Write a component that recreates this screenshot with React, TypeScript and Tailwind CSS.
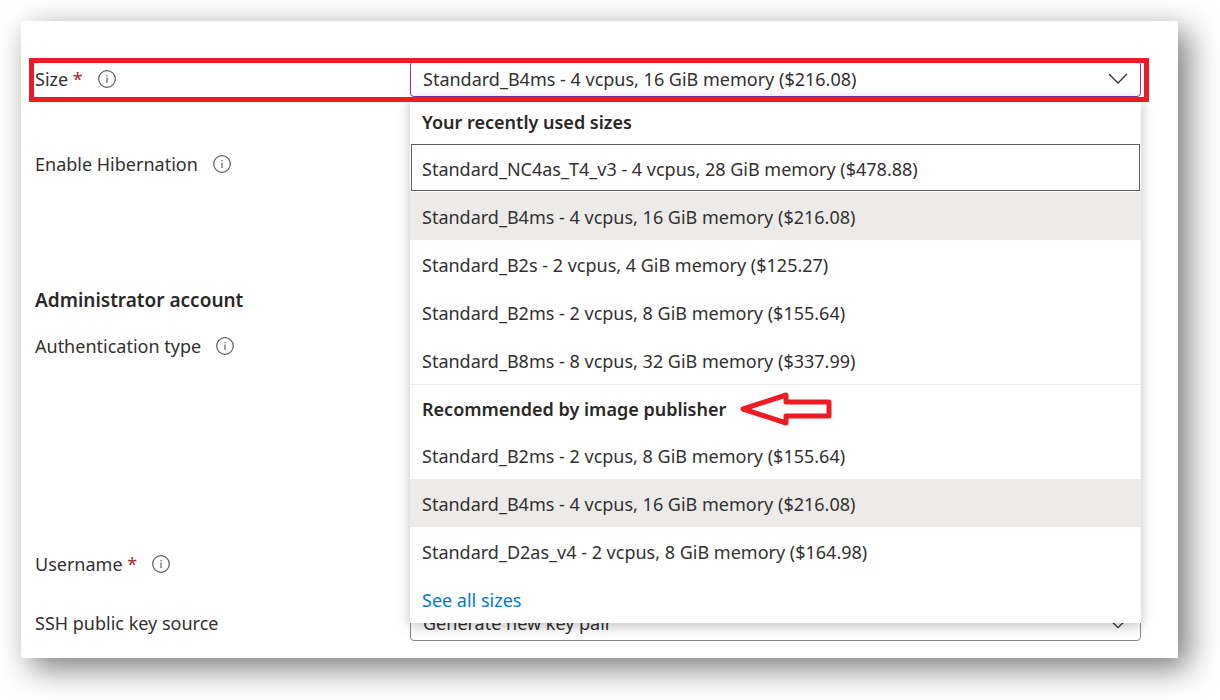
import React, { useState } from 'react';

interface VmSize {
  id: string;
  label: string;
}

interface FieldRowProps {
  label: string;
  htmlFor?: string;
  required?: boolean;
  info?: boolean;
  className?: string;
  children?: React.ReactNode;
}

const recentSizes: VmSize[] = [
  { id: 'nc4as', label: 'Standard_NC4as_T4_v3 - 4 vcpus, 28 GiB memory ($478.88)' },
  { id: 'b4ms', label: 'Standard_B4ms - 4 vcpus, 16 GiB memory ($216.08)' },
  { id: 'b2s', label: 'Standard_B2s - 2 vcpus, 4 GiB memory ($125.27)' },
  { id: 'b2ms', label: 'Standard_B2ms - 2 vcpus, 8 GiB memory ($155.64)' },
  { id: 'b8ms', label: 'Standard_B8ms - 8 vcpus, 32 GiB memory ($337.99)' },
];

const recommendedSizes: VmSize[] = [
  { id: 'b2ms', label: 'Standard_B2ms - 2 vcpus, 8 GiB memory ($155.64)' },
  { id: 'b4ms', label: 'Standard_B4ms - 4 vcpus, 16 GiB memory ($216.08)' },
  { id: 'd2as', label: 'Standard_D2as_v4 - 2 vcpus, 8 GiB memory ($164.98)' },
];

const InfoIcon = () => (
  <svg className="h-[18px] w-[18px] shrink-0" viewBox="0 0 18 18" fill="none" aria-hidden="true">
    <circle cx="9" cy="9" r="8.3" stroke="#605e5c" strokeWidth="1.2" />
    <path d="M9 7.5v5.5M9 5v1.3" stroke="#605e5c" strokeWidth="1.2" />
  </svg>
);

const ChevronIcon = ({ className }: { className: string }) => (
  <svg className={className} viewBox="0 0 20 12" fill="none" aria-hidden="true">
    <path d="M1 1l9 9 9-9" stroke="#323130" strokeWidth="1.3" vectorEffect="non-scaling-stroke" />
  </svg>
);

const FieldRow: React.FC<FieldRowProps> = ({ label, htmlFor, required, info, className = '', children }) => (
  <div className={`relative flex h-9 items-center ${className}`}>
    <div className="flex w-[375px] shrink-0 items-center gap-[15px]">
      <label htmlFor={htmlFor}>
        {label}
        {required && <span className="text-[#a4262c]"> *</span>}
      </label>
      {info && <InfoIcon />}
    </div>
    {children}
  </div>
);

interface SizeGroupProps {
  title: string;
  sizes: VmSize[];
  selected: string;
  focused?: string;
  onSelect: (id: string) => void;
  children?: React.ReactNode;
}

const SizeGroup: React.FC<SizeGroupProps> = ({ title, sizes, selected, focused, onSelect, children }) => (
  <div role="group" aria-label={title}>
    <div className="flex h-[46px] items-center gap-[14px] px-3 pt-[2px] font-semibold text-[#292827]">
      {title}
      {children}
    </div>
    {sizes.map((size) => (
      <button
        key={size.id}
        type="button"
        role="option"
        aria-selected={size.id === selected}
        onClick={() => onSelect(size.id)}
        className={`flex h-12 w-full items-start px-px text-left ${size.id === selected ? 'bg-[#edebe9]' : 'bg-white'}`}
      >
        <span
          className={`flex h-[47px] w-full items-center border px-[10px] pt-[2px] ${size.id === focused ? 'border-[#605e5c]' : 'border-transparent'}`}
        >
          {size.label}
        </span>
      </button>
    ))}
  </div>
);

export default function App() {
  const [size, setSize] = useState('b4ms');
  const allSizes = [...recentSizes, recommendedSizes[2]];

  return (
    <main className="bg-white pt-[21px] pr-[42px] pb-[42px] pl-[21px] font-['Noto_Sans','Open_Sans',sans-serif] text-[18px] leading-6 text-[#323130]">
      <form className="bg-white pt-10 pr-[37px] pb-[17px] pl-[14px] shadow-[10px_10px_30px_rgba(0,0,0,0.53)]">
        <FieldRow label="Size" htmlFor="size" required info className="z-10">
          <div className="relative min-w-0 flex-1">
            <select
              id="size"
              value={size}
              onChange={(e) => setSize(e.target.value)}
              className="block h-9 w-full appearance-none rounded-sm border border-[#8a2da5] bg-white pr-12 pl-3 outline-none"
            >
              {allSizes.map((s) => (
                <option key={s.id} value={s.id}>
                  {s.label}
                </option>
              ))}
            </select>
            <ChevronIcon className="pointer-events-none absolute top-3 right-[13px] h-3 w-5" />
            <div
              role="listbox"
              aria-label="Size"
              className="absolute inset-x-0 top-full bg-white pt-px shadow-[0_3px_12px_rgba(0,0,0,0.25)]"
            >
              <SizeGroup
                title="Your recently used sizes"
                sizes={recentSizes}
                selected={size}
                focused="nc4as"
                onSelect={setSize}
              />
              <div className="border-t border-[#edebe9]">
                <SizeGroup
                  title="Recommended by image publisher"
                  sizes={recommendedSizes}
                  selected={size}
                  onSelect={setSize}
                >
                  <svg className="h-[34px] w-[92px]" viewBox="0 0 92 34" fill="none" aria-hidden="true">
                    <path
                      d="M3 17L46 3v7h43v14H46v7z"
                      stroke="#ed1c24"
                      strokeWidth="5"
                      strokeLinejoin="round"
                    />
                  </svg>
                </SizeGroup>
              </div>
              <a href="#sizes" className="flex h-12 items-center px-3 pt-[2px] text-[#0078d4]">
                See all sizes
              </a>
            </div>
          </div>
          <div className="pointer-events-none absolute -top-[3px] -right-2 -bottom-[5px] -left-[6px] border-5 border-[#ed1c24]" />
        </FieldRow>

        <FieldRow label="Enable Hibernation" info className="mt-[49px]" />

        <h2 className="mt-[100px] flex h-9 items-center text-[19px] font-semibold text-[#292827]">
          Administrator account
        </h2>
        <FieldRow label="Authentication type" info className="mt-[10px]" />

        <FieldRow label="Username" required info className="mt-[182px]" />
        <FieldRow label="SSH public key source" htmlFor="key-source" className="mt-[23px]">
          <div className="relative min-w-0 flex-1">
            <select
              id="key-source"
              className="block h-9 w-full appearance-none rounded-sm border border-[#8a8886] bg-white pr-12 pl-3"
            >
              <option>Generate new key pair</option>
            </select>
            <ChevronIcon className="pointer-events-none absolute top-4 right-4 h-2 w-[14px]" />
          </div>
        </FieldRow>
      </form>
    </main>
  );
}
